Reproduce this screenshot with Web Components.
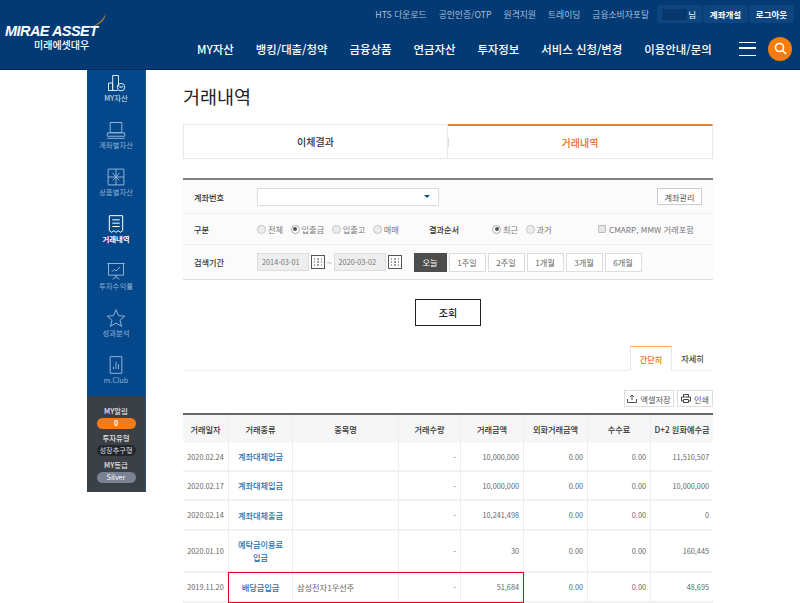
<!DOCTYPE html>
<html lang="ko"><head><meta charset="utf-8">
<style>
html,body{margin:0;padding:0;height:603px;overflow:hidden;background:#fff;font-family:"Noto Sans CJK KR","Noto Sans",sans-serif;}
</style></head><body>
<app-page></app-page>
<script>
const FONT='"Noto Sans CJK KR","Noto Sans",sans-serif';
function def(name,css,html){
  customElements.define(name,class extends HTMLElement{
    constructor(){super();const s=this.attachShadow({mode:'open'});
      s.innerHTML='<style>'+css+'</style>'+(typeof html==='function'?html(this):html);}
  });
}
const icons={
 my:'<path d="M3 21V12h5v9M8 21V3h7v13M3 21h11"/><circle cx="18" cy="17" r="4.500"/><path d="M16 16l1 1.500 1-1.500 1 1.500 1-1.500"/>',
 acct:'<path d="M5 3h14v12H5zM1.500 15.500h21v4h-21zM1.500 22h21"/>',
 prod:'<path d="M2.500 2.500h19v19h-19zM12 2.500v19M2.500 12h19M12 12L8 7M12 12l4-5M12 12l-4 4M12 12l4 4"/>',
 hist:'<path d="M4 2h16v18l-2.700 2-2.700-2-2.600 2-2.600-2-2.700 2L4 20zM7.500 7h9M7.500 11h9M7.500 15h9"/>',
 yield:'<path d="M3 3h18v14H3zM1.500 3h21M12 17v2M12 19l-4 3M12 19l4 3M7 13l3-3 2 2 5-5"/>',
 star:'<path d="M12 2l3 7.200 7.500.6-5.700 4.900 1.800 7.300L12 18l-6.600 4 1.800-7.300L1.500 9.800l7.500-.6z"/>',
 club:'<path d="M5 2h14v20H5zM9 17v-3M12 17V8M15 17v-6"/>'
};
def('side-item',`:host{display:flex;flex-direction:column;align-items:center;height:47px;color:#8fb2d6;font-size:7.400px;line-height:11px}
:host([active]){color:#fff;font-weight:700}
svg{width:20px;height:22px;fill:none;stroke:currentColor;stroke-width:1.200;flex:none}
span{margin-top:-2px;white-space:nowrap}`,
 el=>`<svg viewBox="0 0 24 24">${icons[el.getAttribute('icon')]}</svg><span><slot></slot></span>`);
def('status-pill',`:host{display:block;width:39px;height:11px;line-height:11px;border-radius:6px;text-align:center;font-size:7.200px;color:#ddd;background:#23272d;white-space:nowrap}
:host([kind=o]){background:#f47b16;color:#fff;font-weight:700}
:host([kind=s]){background:#7b8296;color:#fff}`,'<slot></slot>');
def('side-nav',`:host{display:flex;flex-direction:column;width:58px;background:#04478a;border-right:1px solid #33557c;height:422px;font-family:${FONT}}
.list{height:326px;padding-top:2px;box-sizing:border-box}
.panel{height:96px;background:#3b3f46;display:flex;flex-direction:column;align-items:center;padding-top:10px;box-sizing:border-box;color:#e6e6e6;font-size:7.400px;line-height:10px}
.panel b{font-weight:500;margin-bottom:2px;height:10px;}
status-pill{margin-bottom:4px}`,
`<div class="list"><side-item icon="my" style="color:#dfe9f3">MY자산</side-item><side-item icon="acct">계좌별자산</side-item><side-item icon="prod">상품별자산</side-item><side-item icon="hist" active>거래내역</side-item><side-item icon="yield">투자수익률</side-item><side-item icon="star">성과분석</side-item><side-item icon="club">m.Club</side-item></div>
<div class="panel"><b>MY알림</b><status-pill kind="o">0</status-pill><b>투자유형</b><status-pill>성장추구형</status-pill><b>MY등급</b><status-pill kind="s">Silver</status-pill></div>`);
def('util-link',`:host{display:inline-block;font-size:8.800px;color:#a9bdd4;white-space:nowrap}`,'<slot></slot>');
def('top-link',`:host{display:inline-block;font-size:11.400px;color:#fff;font-weight:500;white-space:nowrap}`,'<slot></slot>');
def('app-header',`:host{display:flex;height:70px;background:#033a74;border-bottom:1px solid #02285a;box-sizing:border-box;font-family:${FONT}}
.logo{width:197px;flex:none;padding:24px 0 0 5px;box-sizing:border-box;position:relative;color:#fff}
.logo i{display:block;font:italic 700 14.500px/14px "Liberation Sans",sans-serif;letter-spacing:-.55px;white-space:nowrap}
.logo b{display:block;font-family:"Liberation Sans","Noto Sans CJK KR",sans-serif;font-size:10px;line-height:12px;margin:2px 0 0 29px;font-weight:500;white-space:nowrap}
.logo svg{position:absolute;left:90px;top:13px}
.main{flex:1;display:flex;flex-direction:column;padding-right:6px}
.util{height:28px;display:flex;justify-content:flex-end;align-items:flex-start;padding-top:5px;box-sizing:border-box}
.links{display:flex;gap:12px;margin-right:8px;height:18px;align-items:center}
.pills{display:flex;gap:1px}
.pill{height:18px;width:45px;background:#0d467f;border-radius:3px;font-size:8.500px;font-weight:700;color:#fff;display:flex;align-items:center;justify-content:center;white-space:nowrap}
.pill.u{font-weight:400;justify-content:flex-end;padding-right:6px;box-sizing:border-box}
.pill.u em{width:25px;height:11px;background:#08376d;margin-right:1px;flex:none}
.nav{display:flex;align-items:center;height:42px;margin:1px 2px 0 0}
.items{display:flex;gap:22px;flex:1}
.burger{width:17px;height:14px;box-sizing:border-box;border-top:1.500px solid #fff;border-bottom:1.500px solid #fff;position:relative;margin-right:12px}
.burger:after{content:"";position:absolute;left:0;right:0;top:4.500px;height:1.500px;background:#fff}
.search{width:24px;height:24px;border-radius:50%;background:#f77d0a;display:flex;align-items:center;justify-content:center}`,
`<div class="logo"><i>MIRAE ASSET</i><b>미래에셋대우</b><svg width="18" height="16" viewBox="0 0 18 16"><path d="M16 0C14 6 9 11 1 14c9-2 14-7 15-14z" fill="#f08a1d"/></svg></div>
<div class="main"><div class="util"><div class="links"><util-link>HTS 다운로드</util-link><util-link>공인인증/OTP</util-link><util-link>원격지원</util-link><util-link>트레이딩</util-link><util-link>금융소비자포탈</util-link></div>
<div class="pills"><div class="pill u"><em></em>님</div><div class="pill">계좌개설</div><div class="pill">로그아웃</div></div></div>
<div class="nav"><div class="items"><top-link>MY자산</top-link><top-link>뱅킹/대출/청약</top-link><top-link>금융상품</top-link><top-link>연금자산</top-link><top-link>투자정보</top-link><top-link>서비스 신청/변경</top-link><top-link>이용안내/문의</top-link></div>
<div class="burger"></div><div class="search"><svg width="13" height="13" viewBox="0 0 13 13" fill="none" stroke="#fff" stroke-width="1.600"><circle cx="5.500" cy="5.500" r="4"/><path d="M8.500 8.500l3.500 3.500"/></svg></div></div></div>`);
def('main-tabs',`:host{display:grid;grid-template-columns:265px 265px;height:35px;font-size:10px;font-weight:500;text-align:center;color:#333}
div{display:flex;align-items:center;justify-content:center;box-sizing:border-box;border:1px solid #e8e8e8;position:relative}
div:first-child{border-right:0}
div:last-child{border-left:0;border-top:2px solid #f07d28;color:#e8701a}
div:last-child:before{content:"";position:absolute;left:0;top:12px;height:9px;width:1px;background:#ddd}`,'<div>이체결과</div><div>거래내역</div>');
def('radio-opt',`:host{display:inline-flex;align-items:center;gap:2px;font-size:8.200px;color:#777;white-space:nowrap}
i{width:9px;height:9px;border-radius:50%;border:1px solid #c4c4c4;background:#eee;box-sizing:border-box;display:block;position:relative;flex:none}
:host([on]) i{background:#fff;border-color:#aaa}
:host([on]) i:after{content:"";position:absolute;inset:1.500px;border-radius:50%;background:#555}`,'<i></i><slot></slot>');
def('check-opt',`:host{display:inline-flex;align-items:center;gap:3px;font-size:8.200px;color:#777;white-space:nowrap}
i{width:8px;height:8px;border:1px solid #bbb;background:#e6e6e6;box-sizing:border-box;display:block;flex:none;border-radius:1px}`,'<i></i><slot></slot>');
def('cal-btn',`:host{display:block;width:14px;height:14px;flex:none}`,`<svg width="14" height="14" viewBox="0 0 14 14"><rect x=".5" y=".5" width="13" height="13" fill="#fff" stroke="#555"/><path d="M3 4h1M6 4h2M10 4h1M3 7h1M6 7h2M10 7h1M3 10h1M6 10h2M10 10h1" stroke="#444"/></svg>`);
def('date-field',`:host{display:flex;align-items:center;box-sizing:border-box;width:52px;height:18px;background:#eee;border:1px solid #ddd;font-size:7.300px;color:#777;padding-left:4px;white-space:nowrap;flex:none}`,'<slot></slot>');
def('range-btn',`:host{display:flex;align-items:center;justify-content:center;width:37px;height:19px;box-sizing:border-box;border:1px solid #ddd;background:#fff;font-size:8.200px;color:#666;white-space:nowrap}
:host([on]){background:#4d4d4d;border-color:#4d4d4d;color:#fff}`,'<slot></slot>');
def('search-form',`:host{display:block;background:#fbfbfb;border-top:2px solid #808080;border-bottom:1px solid #ddd;font-size:8.200px;color:#333;font-family:${FONT}}
.r{display:flex;align-items:center;height:34px;border-bottom:1px solid #eee;box-sizing:border-box;padding-left:11px}
.r.k{height:31px}
.r:last-child{border:0;height:34px}
.l{width:63px;flex:none;font-weight:500}
.sel{width:182px;height:18px;background:#fff;border:1px solid #ddd;box-sizing:border-box;display:flex;justify-content:flex-end;align-items:center;padding-right:8px}
.sel:after{content:"";border:3px solid transparent;border-top:3px solid #0b4a8c;border-bottom:0}
.mg{margin-left:auto;margin-right:11px;width:45px;height:17px;border:1px solid #ccc;background:#fff;display:flex;align-items:center;justify-content:center;box-sizing:border-box;color:#555}
.opts{display:flex;gap:7.500px;flex:none}
.g{display:flex;align-items:center;gap:2px}
.rg{display:flex;gap:2px}`,
`<div class="r"><div class="l">계좌번호</div><div class="sel"></div><div class="mg">계좌관리</div></div>
<div class="r k"><div class="l">구분</div><div class="opts" style="width:172px"><radio-opt>전체</radio-opt><radio-opt on>입출금</radio-opt><radio-opt>입출고</radio-opt><radio-opt>매매</radio-opt></div>
<div class="l">결과순서</div><div class="opts" style="width:106px"><radio-opt on>최근</radio-opt><radio-opt>과거</radio-opt></div><check-opt>CMARP, MMW 거래포함</check-opt></div>
<div class="r"><div class="l">검색기간</div><div class="g"><date-field>2014-03-01</date-field><cal-btn></cal-btn><span style="color:#666">~</span><date-field>2020-03-02</date-field><cal-btn></cal-btn></div>
<div class="rg" style="margin-left:12px"><range-btn on style="width:33px">오늘</range-btn><range-btn>1주일</range-btn><range-btn>2주일</range-btn><range-btn>1개월</range-btn><range-btn>3개월</range-btn><range-btn>6개월</range-btn></div></div>`);
def('view-tabs',`:host{display:flex;justify-content:flex-end;height:24px;border-bottom:1px solid #eee;font-size:8.200px;font-weight:500;color:#444}
div{line-height:24px;text-align:center;box-sizing:border-box}
.on{width:42px;color:#e8701a;border:1px solid #e8e8e8;border-top:1px solid #f2a36a;border-bottom:1px solid #fff;height:25px}
div:last-child{width:41px}`,'<div class="on">간단히</div><div>자세히</div>');
def('tool-btn',`:host{display:inline-flex;align-items:center;justify-content:center;gap:3px;height:17px;border:1px solid #ddd;box-sizing:border-box;background:#fff;font-size:8.200px;color:#555;white-space:nowrap}`,'<slot></slot>');
const rows=[
['2020.02.24','계좌대체입금','','-','10,000,000','0.00','0.00','11,510,507',29],
['2020.02.17','계좌대체입금','','-','10,000,000','0.00','0.00','10,000,000',29],
['2020.02.14','계좌대체출금','','-','10,241,498','0.00','0.00','0',30],
['2020.01.10','예탁금이용료<br>입금','','-','30','0.00','0.00','160,445',42],
['2019.11.20','배당금입금','삼성전자1우선주','-','51,684','0.00','0.00','48,695',30]];
def('data-table',`:host{display:block;position:relative;font-size:8.200px;font-family:${FONT}}
.t{display:grid;grid-template-columns:45px 64px 106px 62px 63px 64px 63px 63px;border-top:2px solid #666}
.c{display:flex;align-items:center;box-sizing:border-box;border-left:1px solid #eee;border-bottom:2px solid #f2f2f2;padding:0 4px;color:#666;white-space:nowrap}
.c.f{border-left:0}
.h{background:#f6f6f6;height:28px;justify-content:center;color:#333;font-weight:500;border-bottom:0;}
.n{justify-content:flex-end;font-size:7.300px}
.m{justify-content:center;font-size:7.300px;padding:0}
.a{justify-content:center;text-align:center;color:#1f6fae;font-weight:500;line-height:13px}
.hl{position:absolute;left:45px;top:159px;width:296px;height:31px;border:1px solid #d9071c;box-sizing:border-box;pointer-events:none}`,
()=>{let h='<div class="t">';['거래일자','거래종류','종목명','거래수량','거래금액','외화거래금액','수수료','D+2 원화예수금'].forEach((x,i)=>h+=`<div class="c h${i?'':' f'}">${x}</div>`);
 rows.forEach(r=>{const st=`style="height:${r[8]}px"`;h+=`<div class="c f m" ${st}>${r[0]}</div><div class="c a" ${st}>${r[1]}</div><div class="c" ${st}>${r[2]}</div>`;for(let i=3;i<8;i++)h+=`<div class="c n" ${st}>${r[i]}</div>`;});
 return h+'</div><div class="hl"></div>';});
def('app-page',`:host{display:block;width:800px;height:603px;overflow:hidden;font-family:${FONT}}
.body{display:flex;padding-left:87px}
.content{margin-left:37px;width:530px;display:flex;flex-direction:column}
h1{margin:13px 0 0;font-size:18.500px;font-weight:400;color:#222;line-height:26px;height:41px}
search-form{margin-top:19px}
.go{align-self:center;margin-top:19px;width:66px;height:27px;border:1px solid #222;box-sizing:border-box;display:flex;align-items:center;justify-content:center;font-size:10px;font-weight:500;color:#222}
view-tabs{margin-top:20px}
.tools{display:flex;justify-content:flex-end;gap:3px;margin:19px 0 6px}`,
`<app-header></app-header><div class="body"><side-nav></side-nav><div class="content"><h1>거래내역</h1><main-tabs></main-tabs><search-form></search-form><div class="go">조회</div><view-tabs></view-tabs>
<div class="tools"><tool-btn style="width:50px"><svg width="10" height="9" viewBox="0 0 10 9" fill="none" stroke="#555"><path d="M.5 5v3.500h9V5M5 6V1M3 3l2-2 2 2"/></svg>엑셀저장</tool-btn><tool-btn style="width:36px"><svg width="10" height="9" viewBox="0 0 10 9" fill="none" stroke="#444"><path d="M2.500 3V.5h5V3M2.500 7H.5V3h9v4h-2M2.500 5.500h5v3h-5z"/></svg>인쇄</tool-btn></div>
<data-table></data-table></div></div>`);
</script>
</body></html>
